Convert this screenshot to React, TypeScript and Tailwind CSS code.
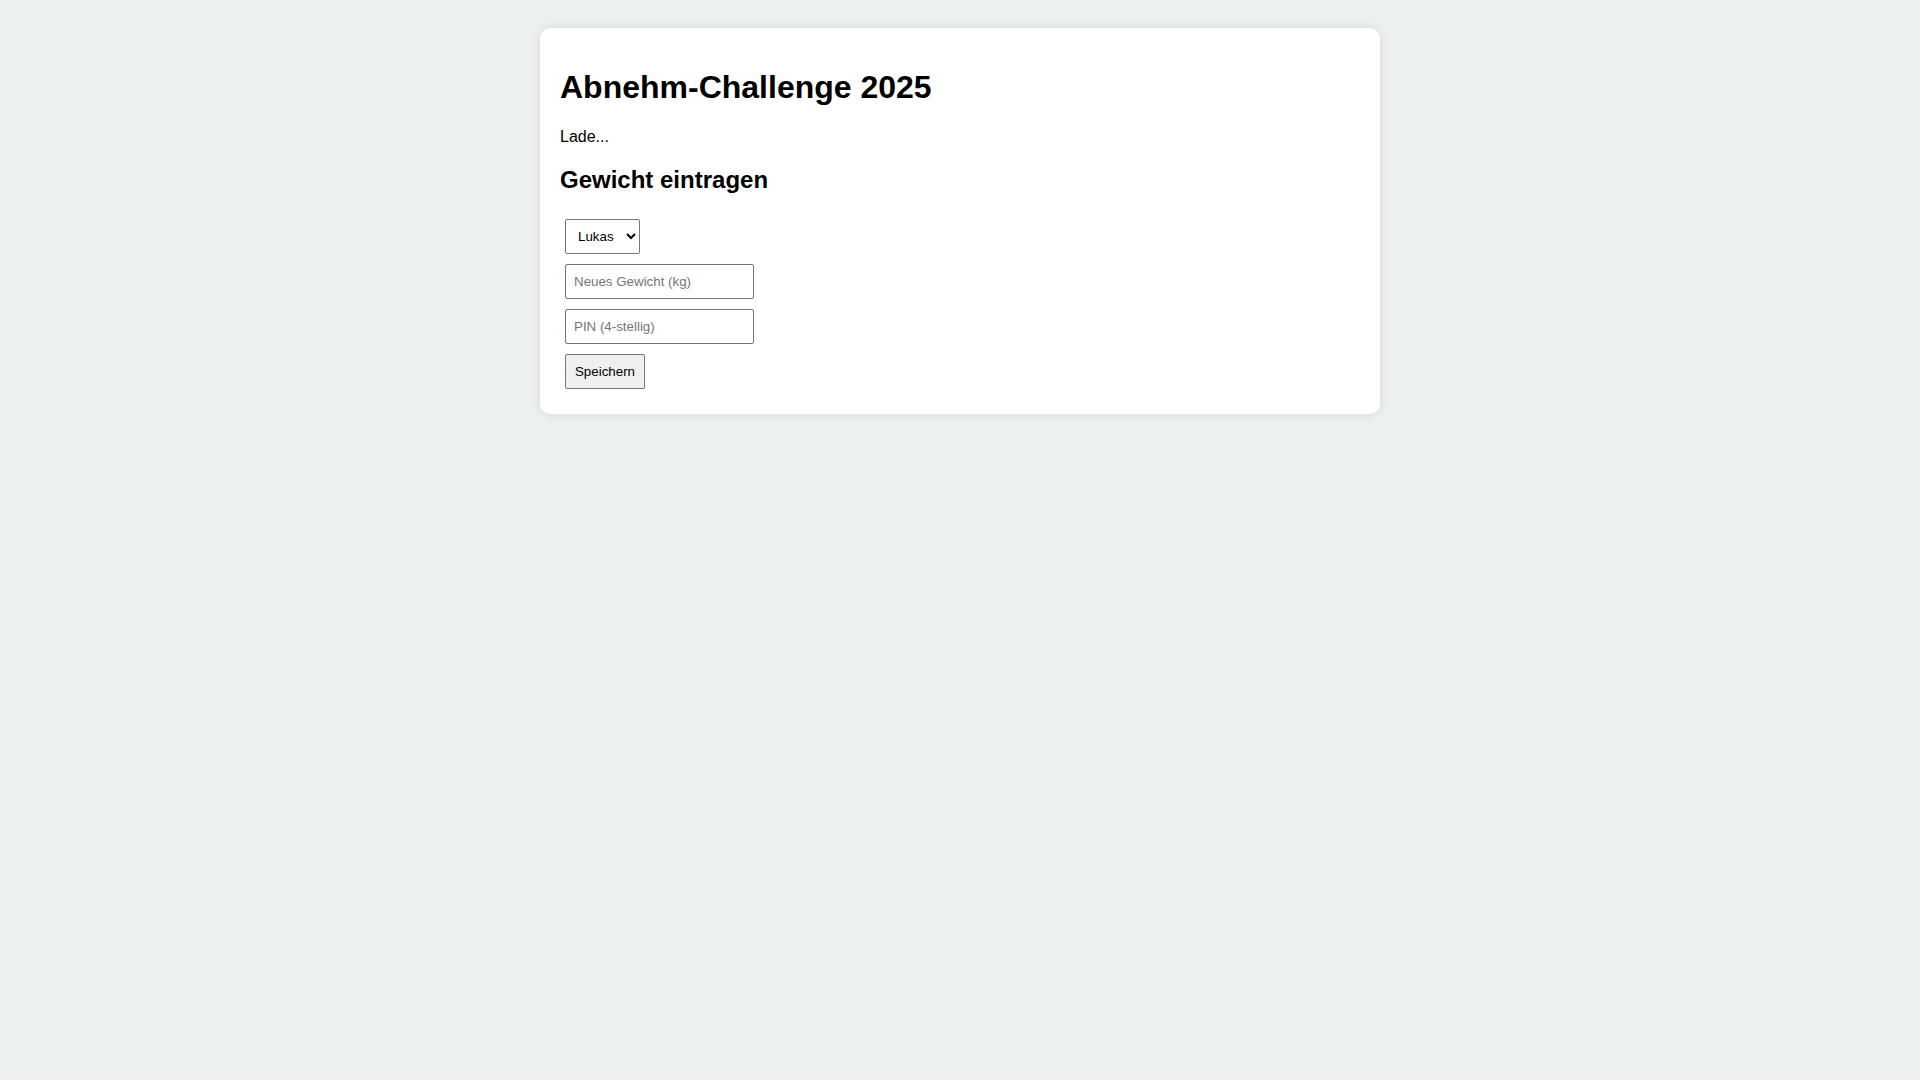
export default function App() {
  return (
    <div className="min-h-screen bg-[#ecf0f1] pt-[28px] font-['Liberation_Sans',Arial,sans-serif] text-black">
      <div className="mx-auto w-[840px] rounded-[10px] bg-white p-5 shadow-[0_0_10px_rgba(0,0,0,0.1)]">
        <h1 className="my-[21.44px] text-[32px] font-bold leading-[36.8px]">Abnehm-Challenge 2025</h1>
        <p className="my-4 text-base leading-[18.4px]">Lade...</p>
        <h2 className="my-[19.92px] text-[24px] font-bold leading-[27.6px]">Gewicht eintragen</h2>
        <form className="flex flex-col items-start gap-[10.6px] px-[5px] pt-[6px] pb-[5px] text-[13.333px]">
          <select className="h-[34.4px] w-[75px] rounded-[2px] border border-[#767676] bg-white px-2 text-black">
            <option>Lukas</option>
          </select>
          <input
            type="number"
            placeholder="Neues Gewicht (kg)"
            className="h-[34.4px] w-[189px] rounded-[2px] border border-[#767676] px-2 placeholder:text-[#757575]"
          />
          <input
            type="password"
            placeholder="PIN (4-stellig)"
            className="h-[34.4px] w-[189px] rounded-[2px] border border-[#767676] px-2 placeholder:text-[#757575]"
          />
          <button
            type="button"
            className="h-[34.4px] w-[80px] rounded-[2px] border border-[#767676] bg-[#efefef] px-2 text-black"
          >
            Speichern
          </button>
        </form>
      </div>
    </div>
  );
}
